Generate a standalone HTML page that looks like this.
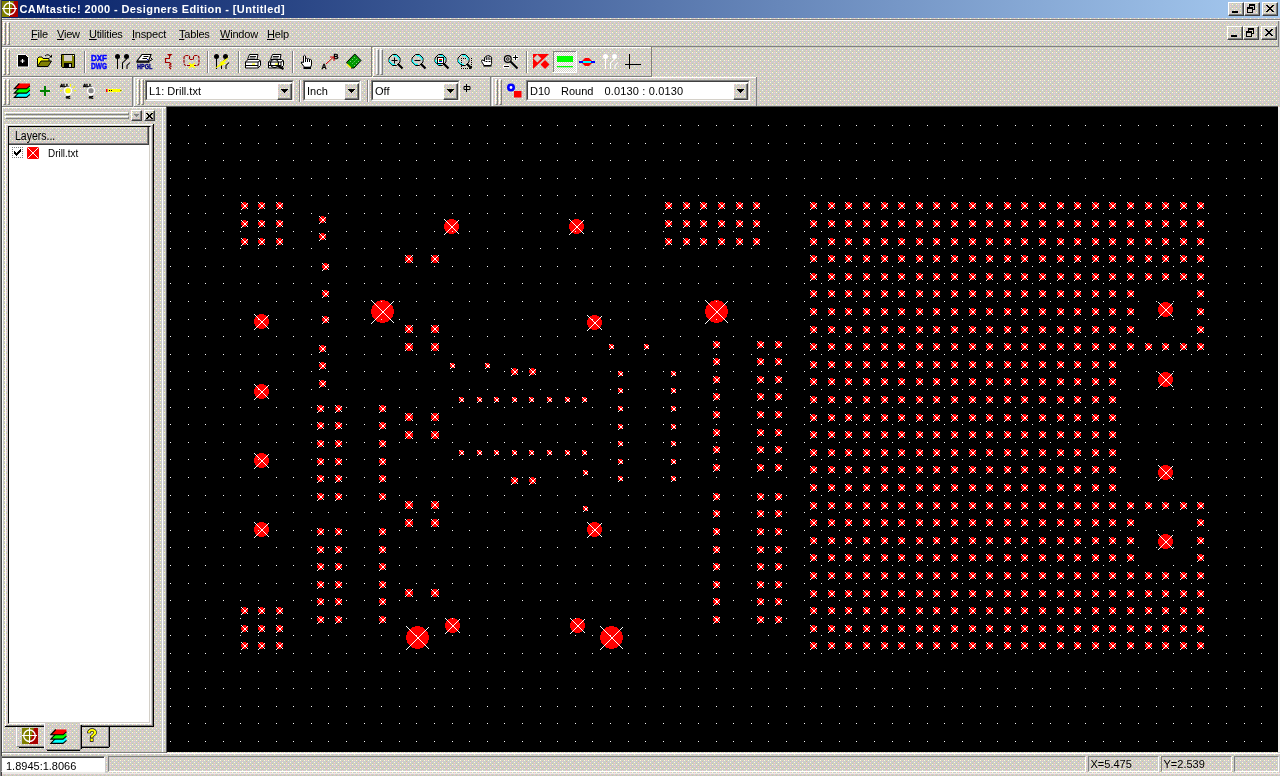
<!DOCTYPE html>
<html><head><meta charset="utf-8"><title>CAMtastic! 2000 - Designers Edition - [Untitled]</title>
<style>
*{box-sizing:border-box;margin:0;padding:0}
html,body{width:1280px;height:776px;overflow:hidden;background:#d4d0c8}
body{position:relative;font-family:"Liberation Sans",sans-serif;font-size:11px;color:#000}
.a{position:absolute}
.bg{position:absolute;left:0;top:0}
.title{position:absolute;left:2px;top:0;width:1278px;height:18px;background:linear-gradient(90deg,#0a246a 0%,#0a246a 3%,#a6caf0 100%)}
.title span{position:absolute;left:17.5px;top:2px;color:#fff;font-weight:bold;font-size:11px;line-height:14px;white-space:nowrap;letter-spacing:0.4px}
.hl{position:absolute;height:1px}
.vl{position:absolute;width:1px}
.w{background:#fff}.d{background:#808080}.k{background:#404040}.b{background:#000}
.btn{position:absolute;border:1px solid;border-color:#fff #404040 #404040 #fff;box-shadow:inset -1px -1px 0 #808080}
.menu span{position:absolute;top:27px;line-height:14px;font-size:11px;white-space:nowrap;letter-spacing:-0.2px}
.menu u{text-decoration:underline}
.sunk{position:absolute;border:1px solid;border-color:#808080 #fff #fff #808080}
.sunk>i{position:absolute;left:0;top:0;right:0;bottom:0;border:1px solid;border-color:#404040 #d4d0c8 #d4d0c8 #404040;background:#fff}
.txt{position:absolute;white-space:nowrap;line-height:14px;font-size:11px}
.grip{position:absolute;width:3px;border:1px solid;border-color:#fff #808080 #808080 #fff}
.sep{position:absolute;width:2px;border-left:1px solid #808080;border-right:1px solid #fff}
</style></head><body>
<div id="root" style="position:absolute;left:0;top:0;width:1280px;height:776px;will-change:transform">
<svg class="bg" width="1280" height="776"><defs><pattern id="dz" width="8" height="8" patternUnits="userSpaceOnUse" shape-rendering="crispEdges"><rect width="8" height="8" fill="#ccc"/><g fill="#ffc"><rect x="0" y="0" width="1" height="1"/><rect x="4" y="0" width="1" height="1"/><rect x="2" y="2" width="1" height="1"/><rect x="0" y="4" width="1" height="1"/><rect x="4" y="4" width="1" height="1"/></g><g fill="#fcc"><rect x="2" y="0" width="1" height="1"/><rect x="6" y="2" width="1" height="1"/><rect x="6" y="4" width="1" height="1"/><rect x="2" y="6" width="1" height="1"/><rect x="6" y="6" width="1" height="1"/></g><g fill="#cc9"><rect x="6" y="1" width="1" height="1"/><rect x="0" y="3" width="1" height="1"/><rect x="4" y="3" width="1" height="1"/><rect x="2" y="5" width="1" height="1"/><rect x="0" y="7" width="1" height="1"/><rect x="4" y="7" width="1" height="1"/></g></pattern></defs><rect width="1280" height="776" fill="url(#dz)"/></svg>
<div class="a" style="left:0;top:0;width:1px;height:776px;background:#808080"></div><div class="a" style="left:1px;top:0;width:1px;height:776px;background:#404040"></div>
<!-- TITLE -->
<div class="title"><span>CAMtastic! 2000 - Designers Edition - [Untitled]</span></div>
<svg class="a" style="left:2px;top:1px" width="16" height="16" viewBox="0 0 16 16"><rect width="16" height="16" fill="#808000"/><path d="M12 0H16V16H7L9.500 9.500L10.500 5Z" fill="#a80000"/><circle cx="7.500" cy="7.750" r="5.800" fill="none" stroke="#fff" stroke-width="1.400"/><path d="M7.500 0.200V15M0 7.500H15" stroke="#fff" stroke-width="1" shape-rendering="crispEdges"/></svg><svg class="a" style="left:1228px;top:2px" width="16" height="14" viewBox="1228 2 16 14"><rect x="1228" y="2" width="16" height="14" fill="url(#dz)"/></svg><svg class="a" style="left:1244px;top:2px" width="16" height="14" viewBox="1244 2 16 14"><rect x="1244" y="2" width="16" height="14" fill="url(#dz)"/></svg><svg class="a" style="left:1262px;top:2px" width="16" height="14" viewBox="1262 2 16 14"><rect x="1262" y="2" width="16" height="14" fill="url(#dz)"/></svg><div class="btn" style="left:1228px;top:2px;width:16px;height:14px;background:transparent"><div class="a" style="left:3px;top:8px;width:6px;height:2px;background:#000"></div></div><div class="btn" style="left:1244px;top:2px;width:16px;height:14px;background:transparent"><div class="a" style="left:4px;top:1px;width:6px;height:6px;border:1px solid #000;border-top-width:2px"></div><div class="a" style="left:2px;top:4px;width:6px;height:6px;border:1px solid #000;border-top-width:2px;background:#d4d0c8"></div></div><div class="btn" style="left:1262px;top:2px;width:16px;height:14px;background:transparent"><svg class="a" style="left:3px;top:2px" width="8" height="7" viewBox="0 0 8 7" shape-rendering="crispEdges"><path d="M0 0h2v1h1v1h2v-1h1v-1h2v1h-1v1h-1v1h-1v1h1v1h1v1h1v1h-2v-1h-1v-1h-2v1h-1v1h-2v-1h1v-1h1v-1h1v-1h-1v-1h-1v-1h-1z" fill="#000"/></svg></div>
<div class="a" style="left:2px;top:19px;width:1278px;height:1px;background:#808080"></div><div class="a" style="left:2px;top:20px;width:1278px;height:1px;background:#fff"></div><div class="a" style="left:2px;top:46px;width:1277px;height:1px;background:#808080"></div><div class="a" style="left:1278px;top:21px;width:1px;height:26px;background:#808080"></div><div class="grip" style="left:3px;top:22px;height:23px"></div><div class="grip" style="left:7px;top:22px;height:23px"></div><div class="menu"><span style="left:31px"><u>F</u>ile</span><span style="left:57px"><u>V</u>iew</span><span style="left:89px"><u>U</u>tilities</span><span style="left:132px"><u>I</u>nspect</span><span style="left:179px"><u>T</u>ables</span><span style="left:220px"><u>W</u>indow</span><span style="left:267px"><u>H</u>elp</span></div><div class="btn" style="left:1227px;top:26px;width:16px;height:14px;background:transparent"><div class="a" style="left:3px;top:8px;width:6px;height:2px;background:#000"></div></div><div class="btn" style="left:1243px;top:26px;width:16px;height:14px;background:transparent"><div class="a" style="left:4px;top:1px;width:6px;height:6px;border:1px solid #000;border-top-width:2px"></div><div class="a" style="left:2px;top:4px;width:6px;height:6px;border:1px solid #000;border-top-width:2px;background:#d4d0c8"></div></div><div class="btn" style="left:1261px;top:26px;width:16px;height:14px;background:transparent"><svg class="a" style="left:3px;top:2px" width="8" height="7" viewBox="0 0 8 7" shape-rendering="crispEdges"><path d="M0 0h2v1h1v1h2v-1h1v-1h2v1h-1v1h-1v1h-1v1h1v1h1v1h1v1h-2v-1h-1v-1h-2v1h-1v1h-2v-1h1v-1h1v-1h1v-1h-1v-1h-1v-1h-1z" fill="#000"/></svg></div>
<div class="a" style="left:2px;top:47px;width:370px;height:1px;background:#fff"></div><div class="a" style="left:2px;top:76px;width:370px;height:1px;background:#808080"></div><div class="a" style="left:371px;top:47px;width:1px;height:30px;background:#808080"></div><div class="a" style="left:2px;top:48px;width:1px;height:28px;background:#fff"></div><div class="grip" style="left:3px;top:49px;height:26px"></div><div class="grip" style="left:7px;top:49px;height:26px"></div><div class="sep" style="left:84px;top:51px;height:22px"></div><div class="sep" style="left:207px;top:51px;height:22px"></div><div class="sep" style="left:238px;top:51px;height:22px"></div><div class="sep" style="left:292px;top:51px;height:22px"></div><div class="a" style="left:373px;top:47px;width:279px;height:1px;background:#fff"></div><div class="a" style="left:373px;top:76px;width:279px;height:1px;background:#808080"></div><div class="a" style="left:651px;top:47px;width:1px;height:30px;background:#808080"></div><div class="a" style="left:373px;top:48px;width:1px;height:28px;background:#fff"></div><div class="grip" style="left:376px;top:49px;height:26px"></div><div class="grip" style="left:380px;top:49px;height:26px"></div><div class="sep" style="left:526px;top:51px;height:22px"></div><svg class="a" style="left:553px;top:51px" width="24" height="22" viewBox="0 0 24 22" shape-rendering="crispEdges"><defs><pattern id="chk" width="2" height="2" patternUnits="userSpaceOnUse"><rect width="2" height="2" fill="#fff"/><rect width="1" height="1" fill="#d4d0c8"/><rect x="1" y="1" width="1" height="1" fill="#d4d0c8"/></pattern></defs><rect width="24" height="22" fill="url(#chk)"/><path d="M0 0h24v1h-24zM0 0h1v22h-1z" fill="#808080"/><path d="M0 21h24v1h-24zM23 0h1v22h-1z" fill="#fff"/></svg><div class="a" style="left:2px;top:77px;width:131px;height:1px;background:#fff"></div><div class="a" style="left:2px;top:106px;width:131px;height:1px;background:#808080"></div><div class="a" style="left:132px;top:77px;width:1px;height:30px;background:#808080"></div><div class="a" style="left:2px;top:78px;width:1px;height:28px;background:#fff"></div><div class="grip" style="left:3px;top:79px;height:26px"></div><div class="grip" style="left:7px;top:79px;height:26px"></div><div class="a" style="left:134px;top:77px;width:357px;height:1px;background:#fff"></div><div class="a" style="left:134px;top:106px;width:357px;height:1px;background:#808080"></div><div class="a" style="left:490px;top:77px;width:1px;height:30px;background:#808080"></div><div class="a" style="left:134px;top:78px;width:1px;height:28px;background:#fff"></div><div class="grip" style="left:137px;top:79px;height:26px"></div><div class="grip" style="left:141px;top:79px;height:26px"></div><div class="sunk" style="left:145px;top:80px;width:149px;height:21px"><i></i><span class="txt" style="left:3px;top:3px">L1: Drill.txt</span></div><svg class="a" style="left:277px;top:83px" width="15" height="17" viewBox="277 83 15 17"><rect x="277" y="83" width="15" height="17" fill="url(#dz)"/></svg><div class="btn" style="left:277px;top:83px;width:15px;height:17px"><svg class="a" style="left:3px;top:5px" width="7" height="4" viewBox="0 0 7 4" shape-rendering="crispEdges"><path d="M0 0h7v1h-1v1h-1v1h-1v1h-1v-1h-1v-1h-1v-1h-1z" fill="#000"/></svg></div><div class="sep" style="left:299px;top:80px;height:22px"></div><div class="sunk" style="left:303px;top:80px;width:58px;height:21px"><i></i><span class="txt" style="left:3px;top:3px">Inch</span></div><svg class="a" style="left:344px;top:83px" width="15" height="17" viewBox="344 83 15 17"><rect x="344" y="83" width="15" height="17" fill="url(#dz)"/></svg><div class="btn" style="left:344px;top:83px;width:15px;height:17px"><svg class="a" style="left:3px;top:5px" width="7" height="4" viewBox="0 0 7 4" shape-rendering="crispEdges"><path d="M0 0h7v1h-1v1h-1v1h-1v1h-1v-1h-1v-1h-1v-1h-1z" fill="#000"/></svg></div><div class="sep" style="left:367px;top:80px;height:22px"></div><div class="sunk" style="left:371px;top:80px;width:89px;height:21px"><i></i><span class="txt" style="left:3px;top:3px">Off</span></div><svg class="a" style="left:443px;top:83px" width="15" height="17" viewBox="443 83 15 17"><rect x="443" y="83" width="15" height="17" fill="url(#dz)"/></svg><div class="btn" style="left:443px;top:83px;width:15px;height:17px"><svg class="a" style="left:3px;top:5px" width="7" height="4" viewBox="0 0 7 4" shape-rendering="crispEdges"><path d="M0 0h7v1h-1v1h-1v1h-1v1h-1v-1h-1v-1h-1v-1h-1z" fill="#000"/></svg></div><div class="a" style="left:492px;top:77px;width:265px;height:1px;background:#fff"></div><div class="a" style="left:492px;top:106px;width:265px;height:1px;background:#808080"></div><div class="a" style="left:756px;top:77px;width:1px;height:30px;background:#808080"></div><div class="a" style="left:492px;top:78px;width:1px;height:28px;background:#fff"></div><div class="grip" style="left:495px;top:79px;height:26px"></div><div class="grip" style="left:499px;top:79px;height:26px"></div><div class="sunk" style="left:526px;top:80px;width:224px;height:21px"><i></i><span class="txt" style="left:3px;top:3px">D10<span class="txt" style="left:31px;top:0">Round</span><span class="txt" style="left:74.5px;top:0;letter-spacing:0.15px">0.0130 : 0.0130</span></span></div><svg class="a" style="left:733px;top:83px" width="15" height="17" viewBox="733 83 15 17"><rect x="733" y="83" width="15" height="17" fill="url(#dz)"/></svg><div class="btn" style="left:733px;top:83px;width:15px;height:17px"><svg class="a" style="left:3px;top:5px" width="7" height="4" viewBox="0 0 7 4" shape-rendering="crispEdges"><path d="M0 0h7v1h-1v1h-1v1h-1v1h-1v-1h-1v-1h-1v-1h-1z" fill="#000"/></svg></div><svg class="a" style="left:0;top:47px" width="760" height="59" viewBox="0 47 760 59"><path d="M17.5 54.5h8l3 3v9.5h-11z" fill="#000" stroke="#fff" stroke-width="1"/><path d="M22.5 59v4M20.5 61h4" stroke="#fff" stroke-width="1.2"/><rect x="26" y="55" width="1" height="1" fill="#fff"/><path d="M37.5 66.5v-8l1.5-1.5h3l1 1.5h6v2.5" fill="#ff0" stroke="#000" stroke-width="1"/><path d="M37.5 66.5l3.5-5.5h10.5l-3.5 5.5z" fill="#808000" stroke="#000" stroke-width="1"/><path d="M45 56q3-3 6 1" fill="none" stroke="#000" stroke-width="1"/><path d="M49 57.5h3v-3z" fill="#000"/><path d="M61.5 54.5h13v13h-12l-1-1z" fill="#808000" stroke="#000" stroke-width="1"/><rect x="64" y="55" width="8" height="6" fill="#d4d0c8"/><rect x="64" y="63" width="8" height="4.5" fill="#000"/><rect x="69" y="64" width="2" height="3" fill="#d4d0c8"/><rect x="73" y="55" width="1" height="1" fill="#fff"/><g font-family="Liberation Sans,sans-serif" font-weight="bold" font-size="9" fill="#00f" stroke="#00f" stroke-width="0.5"><text x="91" y="60.6" textLength="16" lengthAdjust="spacingAndGlyphs">DXF</text><text x="91" y="68.6" textLength="16" lengthAdjust="spacingAndGlyphs">DWG</text></g><g transform="translate(115 54)"><circle cx="2.500" cy="2.500" r="2.500" fill="#000"/><circle cx="11.500" cy="2.500" r="2.500" fill="#000"/><path d="M2.500 3v12M11.500 3v2l-4 4v6M15 8.500l-3 3v3.500" fill="none" stroke="#000" stroke-width="1.050"/></g><path d="M142 54.500H151L148.500 61H137Z" fill="#fff" stroke="#000" stroke-width="1.100"/><path d="M143.500 56.500H148.500M142.500 58.500H147" stroke="#000" stroke-width="1"/><path d="M136.500 62H149.500" stroke="#000" stroke-width="1.600"/><path d="M148.500 61.500L152.500 59.500L150.500 57.500" fill="none" stroke="#000" stroke-width="1"/><rect x="147" y="59" width="1" height="1" fill="#00f"/><text x="137" y="69" font-family="Liberation Sans,sans-serif" font-weight="bold" font-size="7" fill="#000080" stroke="#000080" stroke-width="0.400" textLength="15.500" lengthAdjust="spacingAndGlyphs">HPGL</text><path d="M167 54h5.500l-2.750 2.800z" fill="#a00000"/><path d="M169.500 56v2.500h-4v4h4l1.500 1.500l-1.500 1l1.500 1.300l-1.500 1.200l1.500 1.500" fill="none" stroke="#a00000" stroke-width="1.200"/><path d="M190 65.500h-3.500q-2.500 0-2.500-2.500v-5q0-2.500 2.500-2.500h1.500q1.500 0 1.500 1.500v2.500h4v-2.500q0-1.500 1.500-1.500h1.500q2.500 0 2.500 2.500v5q0 2.500-2.500 2.500h-3" fill="none" stroke="#900" stroke-width="1.2" stroke-dasharray="3 0.8"/><path d="M189 63l6 5M195 63l-6 5" stroke="#ff0" stroke-width="1.2"/><rect x="190" y="64" width="4" height="3" fill="#ff0"/><g transform="translate(214 54)"><circle cx="2.500" cy="2.500" r="2.500" fill="#000"/><circle cx="11.500" cy="2.500" r="2.500" fill="#000"/><path d="M2.500 3v12M11.500 3v2l-4 4v6M15 8.500l-3 3v3.500" fill="none" stroke="#000" stroke-width="1.050"/></g><path d="M214 69l7-6h-2l10-6l-5 6h3z" fill="#ff0"/><g transform="translate(245 54)"><path d="M4.500 0.500h8.500l-1 5h-9.500z" fill="#fff" stroke="#000" stroke-width="1"/><path d="M5 2.500h6M4.500 4h6" stroke="#000" stroke-width="0.900"/><path d="M0.500 8l2.500-2.500h10.500l2 1.500v4.500l-2.500 2.500h-12.500z" fill="#fff" stroke="#000" stroke-width="1"/><path d="M0.500 8h12.500l2.500-1.500M13 8v5.500M1 11.500h12" fill="none" stroke="#000" stroke-width="1"/><rect x="7" y="9.500" width="3" height="1.200" fill="#ff0"/></g><g transform="translate(268 54)"><path d="M4.500 0.500h8.500l-1 5h-9.500z" fill="#fff" stroke="#000" stroke-width="1"/><path d="M5 2.500h6M4.500 4h6" stroke="#000" stroke-width="0.900"/><path d="M0.500 8l2.500-2.500h10.500l2 1.500v4.500l-2.500 2.500h-12.500z" fill="#fff" stroke="#000" stroke-width="1"/><path d="M0.500 8h12.500l2.500-1.500M13 8v5.500M1 11.500h12" fill="none" stroke="#000" stroke-width="1"/><rect x="7" y="9.500" width="3" height="1.200" fill="#ff0"/></g><circle cx="274.500" cy="63.500" r="4" fill="none" stroke="#000" stroke-width="1.2"/><path d="M278 66l5.500 3" stroke="#000" stroke-width="2"/><path d="M303.500 62.500V56q1-1.500 2 0V59.500V58.800q1-1 2 0V60V59.200q1-1 2 0V60.500V59.800q1.200-1 2 0.200V65l-1 2.200H304.500L301.300 63q-0.300-1.800 2.200-0.500z" fill="#fff" stroke="#000" stroke-width="1"/><path d="M305.500 58.500v3.500M307.500 59v3M309.500 59.500v2.500" stroke="#000" stroke-width="1"/><rect x="303.500" y="67" width="7.500" height="2" fill="#000"/><g font-family="Liberation Sans,sans-serif" font-weight="bold" font-size="7" fill="#000" stroke="#000" stroke-width="0.3"><text x="321.500" y="69">A</text><text x="333.500" y="59">B</text></g><path d="M326 64l7.500-7" stroke="#c00" stroke-width="1"/><path d="M330 57h4v4" fill="none" stroke="#c00" stroke-width="1"/><path d="M354.800 54L361 60.500L354 68H351L346.500 62.500Z" fill="#009900" stroke="#000" stroke-width="1"/><path d="M347 64L351 68" stroke="#ff0" stroke-width="1.300"/><path d="M350 62l5.500-5.500M352.500 63.500l5.500-5.500M354 66l5-5" stroke="#bfe8bf" stroke-width="1" stroke-dasharray="1 1.800"/><g transform="translate(388 54)"><path d="M4.500 0.500h4l3.500 3.500v4l-3.500 3.500h-4l-3.500-3.500v-4z" fill="none" stroke="#000" stroke-width="1"/><path d="M5.500 1.600h2.700l2.800 2.800v1.800M1.600 5.500v2.100l2.800 2.800h2.400" fill="none" stroke="#0ff" stroke-width="1.100"/><path d="M9.800 9.800l4.700 4.700" stroke="#000" stroke-width="2.200"/></g><path d="M394.500 57.500v6M391.500 60.500h6" stroke="#000" stroke-width="1"/><g transform="translate(411 54)"><path d="M4.500 0.500h4l3.500 3.500v4l-3.500 3.500h-4l-3.500-3.500v-4z" fill="none" stroke="#000" stroke-width="1"/><path d="M5.500 1.600h2.700l2.800 2.800v1.800M1.600 5.500v2.100l2.800 2.800h2.400" fill="none" stroke="#0ff" stroke-width="1.100"/><path d="M9.800 9.800l4.700 4.700" stroke="#000" stroke-width="2.200"/></g><path d="M414.500 60.500h6" stroke="#000" stroke-width="1"/><g transform="translate(434 54)"><path d="M4.500 0.500h4l3.500 3.500v4l-3.500 3.500h-4l-3.500-3.500v-4z" fill="none" stroke="#000" stroke-width="1"/><path d="M5.500 1.600h2.700l2.800 2.800v1.800M1.600 5.500v2.100l2.800 2.800h2.400" fill="none" stroke="#0ff" stroke-width="1.100"/><path d="M9.800 9.800l4.700 4.700" stroke="#000" stroke-width="2.200"/></g><rect x="437.500" y="57.500" width="6" height="6" fill="#fff" stroke="#000" stroke-width="1"/><rect x="439" y="59" width="3" height="1" fill="#f00"/><rect x="439" y="60" width="3" height="1" fill="#0c0"/><rect x="439" y="61" width="3" height="1" fill="#00f"/><g transform="translate(457 54)"><path d="M4.500 0.500h4l3.500 3.500v4l-3.500 3.500h-4l-3.500-3.500v-4z" fill="none" stroke="#000" stroke-width="1"/><path d="M5.500 1.600h2.700l2.800 2.800v1.800M1.600 5.500v2.100l2.800 2.800h2.400" fill="none" stroke="#0ff" stroke-width="1.100"/><path d="M9.800 9.800l4.700 4.700" stroke="#000" stroke-width="2.200"/></g><path d="M461.500 58v10M461 68.500h10M471.500 58v10M461 58.500h6" fill="none" stroke="#000" stroke-width="1" stroke-dasharray="1 1" shape-rendering="crispEdges"/><path d="M484 65.500L481.600 61.500q-0.300-2 1.400-1.500l1.500 1.200V57.500q0.800-1.300 1.700 0V56.200q0.900-1.300 1.800 0V56q0.900-1.300 1.800 0V57q0.900-1.200 1.800 0.200V63.500L490.800 65.500Z" fill="#fff" stroke="#000" stroke-width="1"/><path d="M485.500 61.500h2M488.500 61.500h2M486.300 57.500v2.500M488.100 57v3M489.900 57.500v2.500" stroke="#000" stroke-width="1"/><rect x="483.500" y="65.200" width="8" height="1.400" fill="#000"/><circle cx="507.800" cy="59" r="3.400" fill="none" stroke="#000" stroke-width="1.200"/><circle cx="507.800" cy="59" r="1.300" fill="none" stroke="#000" stroke-width="0.900"/><path d="M510.500 61.500l7 7" stroke="#000" stroke-width="2"/><path d="M512.500 57.500h6M515.500 54.500v6" stroke="#fff" stroke-width="2.800"/><path d="M513 57.500h5M515.500 55v5" stroke="#000" stroke-width="1.300" shape-rendering="crispEdges"/><path d="M503 66.500h6.500" stroke="#fff" stroke-width="3"/><path d="M504 66.500h5" stroke="#000" stroke-width="1.300" shape-rendering="crispEdges"/><path d="M533 54h16l-16 15z" fill="#f00"/><path d="M537.300 54.500l4 4l-4 4l-4-4z" fill="#d4d0c8"/><path d="M545 60l4.500 4.500l-4.500 4.500l-4.500-4.500z" fill="#f00"/><rect x="557" y="56" width="16" height="6" fill="#0f0"/><rect x="557" y="66" width="16" height="1.300" fill="#0f0"/><path d="M585 58h4l2.500 2.500v3l-2.500 2.500h-4l-2.500-2.500v-3z" fill="#f00"/><rect x="579" y="61" width="16" height="2" fill="#00f"/><rect x="583" y="61" width="8" height="2" fill="#0ff"/><g transform="translate(603 54)"><circle cx="2.500" cy="2.500" r="2.500" fill="#fff"/><circle cx="11.500" cy="2.500" r="2.500" fill="#fff"/><path d="M2.500 3v12M11.500 3v2l-4 4v6M15 8.500l-3 3v3.500" fill="none" stroke="#fff" stroke-width="1.050"/></g><path d="M629.500 54v15M625 64.500h16" stroke="#000" stroke-width="1"/><g transform="translate(13.500 83)"><g transform="translate(0 8.6)"><path d="M5.500 0.500H16.500V2.800L13 5.800H0.500Z" fill="#0ff"/><path d="M5.800 0.500L0.800 5.800H13L16.500 2.800" fill="none" stroke="#000" stroke-width="1.100"/></g><g transform="translate(0 4.3)"><path d="M5.500 0.500H16.500V2.800L13 5.800H0.500Z" fill="#0f0"/><path d="M5.800 0.500L0.800 5.800H13L16.500 2.800" fill="none" stroke="#000" stroke-width="1.100"/></g><g transform="translate(0 0.0)"><path d="M5.500 0.500H16.500V2.800L13 5.800H0.500Z" fill="#f00"/><path d="M5.800 0.500L0.800 5.800H13L16.500 2.800" fill="none" stroke="#000" stroke-width="1.100"/></g></g><path d="M45 86v10M40 91h10" stroke="#008000" stroke-width="2"/><g transform="translate(60 84)"><text x="0" y="3" font-family="Liberation Sans,sans-serif" font-weight="bold" font-size="4.300" fill="#000" stroke="#000" stroke-width="0.450" textLength="9" lengthAdjust="spacingAndGlyphs">ALL</text><circle cx="8" cy="6.700" r="3.500" fill="none" stroke="#fff" stroke-width="1.300"/><path d="M6 9.500h4v2h-4z" fill="#fff"/><circle cx="8" cy="6.700" r="2.500" fill="#ff0"/><path d="M10.500 0v2.500M13.200 4.200l1.800-1.800M14 6.700h2.200M0 6.700h2.200" stroke="#ff0" stroke-width="1.100"/><path d="M6 13.500q1-1.600 2 0q1 1.600 2.200 0.300M10.200 12.400q-1.200-0.300-2.200 1.100q-1 1.400-2 0" fill="none" stroke="#000" stroke-width="1.250"/></g><g transform="translate(83 84)"><text x="0" y="3" font-family="Liberation Sans,sans-serif" font-weight="bold" font-size="4.300" fill="#000" stroke="#000" stroke-width="0.450" textLength="9" lengthAdjust="spacingAndGlyphs">ALL</text><circle cx="8" cy="6.700" r="3.500" fill="none" stroke="#fff" stroke-width="1.300"/><path d="M6 9.500h4v2h-4z" fill="#fff"/><circle cx="8" cy="6.700" r="2.500" fill="#8a8a8a"/><path d="M6 13.500q1-1.600 2 0q1 1.600 2.200 0.300M10.200 12.400q-1.200-0.300-2.200 1.100q-1 1.400-2 0" fill="none" stroke="#000" stroke-width="1.250"/></g><rect x="106" y="89" width="1.500" height="3" fill="#f00"/><path d="M108 89h12l2 1.500l-2 1.500h-12z" fill="#ff0"/><rect x="109" y="90" width="1" height="1" fill="#000"/><rect x="111" y="90" width="1" height="1" fill="#000"/><rect x="120" y="90" width="1.500" height="1" fill="#880"/><path d="M466.500 84v8M464 86.500h6v3h-6z" fill="none" stroke="#000" stroke-width="1"/><circle cx="511" cy="87.500" r="2.700" fill="#fff" stroke="#00f" stroke-width="2.600"/><rect x="514" y="91" width="7.500" height="6.500" fill="#f00"/></svg>
<div class="a" style="left:2px;top:107px;width:164px;height:1px;background:#fff"></div><div class="a" style="left:2px;top:107px;width:1px;height:646px;background:#fff"></div><div class="a" style="left:162px;top:108px;width:1px;height:645px;background:#fff"></div><div class="a" style="left:2px;top:752px;width:165px;height:1px;background:#808080"></div><div class="a" style="left:1278px;top:107px;width:2px;height:645px;background:#f4f2f0"></div><div class="a" style="left:166px;top:106px;width:1112px;height:1px;background:#555"></div><div class="a" style="left:166px;top:106px;width:1px;height:647px;background:#555"></div><div class="a" style="left:5px;top:112px;width:124px;height:3px;border:1px solid;border-color:#fff #808080 #808080 #fff"></div><div class="a" style="left:5px;top:116px;width:124px;height:3px;border:1px solid;border-color:#fff #808080 #808080 #fff"></div><div class="btn" style="left:131px;top:110px;width:11px;height:11px"><svg class="a" style="left:2px;top:3px" width="5" height="3" viewBox="0 0 5 3" shape-rendering="crispEdges"><path d="M0 0h5v1h-1v1h-1v1h-1v-1h-1v-1h-1z" fill="#808080"/><path d="M1 1h1v1h1v1h1v-1h1v-1" fill="none"/></svg></div><div class="btn" style="left:144px;top:110px;width:11px;height:11px"><svg class="a" style="left:1px;top:2px" width="7" height="6" viewBox="0 0 7 6" shape-rendering="crispEdges"><path d="M0 0h2v1h1v1h1v-1h1v-1h2v1h-1v1h-1v2h1v1h1v1h-2v-1h-1v-1h-1v1h-1v1h-2v-1h1v-1h1v-2h-1v-1h-1z" fill="#000"/></svg></div><div class="a" style="left:5px;top:124px;width:1px;height:602px;background:#fff"></div><div class="a" style="left:5px;top:124px;width:148px;height:1px;background:#fff"></div><div class="a" style="left:153px;top:124px;width:1px;height:603px;background:#000"></div><div class="a" style="left:152px;top:125px;width:1px;height:601px;background:#808080"></div><div class="a" style="left:6px;top:725px;width:147px;height:1px;background:#808080"></div><div class="a" style="left:5px;top:726px;width:149px;height:1px;background:#000"></div><div class="a" style="left:8px;top:126px;width:143px;height:598px;background:#fff;border:1px solid;border-color:#000 #fff #fff #000"></div><div class="a" style="left:149px;top:127px;width:1px;height:596px;background:#d4d0c8"></div><div class="a" style="left:9px;top:722px;width:141px;height:1px;background:#d4d0c8"></div><svg class="a" style="left:9px;top:127px" width="140" height="18" viewBox="9 127 140 18"><rect x="9" y="127" width="140" height="18" fill="url(#dz)"/></svg><div class="a" style="left:9px;top:127px;width:140px;height:18px;border-bottom:1px solid #404040;border-right:1px solid #404040;box-shadow:inset -1px -1px 0 #808080"></div><span class="txt" style="left:14.5px;top:129px;font-size:12.5px;transform:scaleX(0.84);transform-origin:0 0">Layers...</span><div class="a" style="left:12px;top:147px;width:11px;height:11px;border:1px dotted #808080;background:#fff"></div><svg class="a" style="left:14px;top:149px" width="7" height="7" viewBox="0 0 7 7" shape-rendering="crispEdges"><path d="M0 2h1v1h1v1h1v-1h1v-1h1v-1h1v-1h1v3h-1v1h-1v1h-1v1h-1v1h-1v-1h-1v-1h-1z" fill="#000"/></svg><svg class="a" style="left:27px;top:147px" width="12" height="12" viewBox="0 0 12 12"><rect width="12" height="12" rx="1.5" fill="#f00"/><path d="M1 1L11 11M11 1L1 11" stroke="#fff" stroke-width="1"/></svg><span class="txt" style="left:47.5px;top:145.5px;font-size:11.5px;transform:scaleX(0.86);transform-origin:0 0">Drill.txt</span><div class="a" style="left:16px;top:727px;width:1px;height:19px;background:#fff"></div><div class="a" style="left:17px;top:746px;width:27px;height:1px;background:#808080"></div><div class="a" style="left:19px;top:747px;width:25px;height:1px;background:#000"></div><svg class="a" style="left:22px;top:728px" width="16" height="16" viewBox="0 0 16 16"><rect width="16" height="16" fill="#808000"/><path d="M12 0H16V16H7L9.500 9.500L10.500 5Z" fill="#a80000"/><circle cx="7.500" cy="7.750" r="5.800" fill="none" stroke="#fff" stroke-width="1.400"/><path d="M7.500 0.200V15M0 7.500H15" stroke="#fff" stroke-width="1" shape-rendering="crispEdges"/></svg><svg class="a" style="left:45px;top:723px" width="35" height="27" viewBox="45 723 35 27"><rect x="45" y="723" width="35" height="27" fill="url(#dz)"/></svg><div class="a" style="left:44px;top:724px;width:1px;height:25px;background:#fff"></div><div class="a" style="left:46px;top:749px;width:34px;height:1px;background:#808080"></div><div class="a" style="left:47px;top:750px;width:33px;height:1px;background:#000"></div><div class="a" style="left:80px;top:725px;width:1px;height:25px;background:#808080"></div><div class="a" style="left:81px;top:725px;width:1px;height:24px;background:#000"></div><svg class="a" style="left:50px;top:728.5px" width="18" height="16" viewBox="0 0 18 16"><g transform="translate(0 8.6)"><path d="M5.500 0.500H16.500V2.800L13 5.800H0.500Z" fill="#0ff"/><path d="M5.800 0.500L0.800 5.800H13L16.500 2.800" fill="none" stroke="#000" stroke-width="1.100"/></g><g transform="translate(0 4.3)"><path d="M5.500 0.500H16.500V2.800L13 5.800H0.500Z" fill="#0f0"/><path d="M5.800 0.500L0.800 5.800H13L16.500 2.800" fill="none" stroke="#000" stroke-width="1.100"/></g><g transform="translate(0 0.0)"><path d="M5.500 0.500H16.500V2.800L13 5.800H0.500Z" fill="#f00"/><path d="M5.800 0.500L0.800 5.800H13L16.500 2.800" fill="none" stroke="#000" stroke-width="1.100"/></g></svg><div class="a" style="left:82px;top:746px;width:27px;height:1px;background:#808080"></div><div class="a" style="left:82px;top:747px;width:27px;height:1px;background:#000"></div><div class="a" style="left:108px;top:727px;width:1px;height:20px;background:#808080"></div><div class="a" style="left:109px;top:727px;width:1px;height:20px;background:#000"></div><svg class="a" style="left:85px;top:726px" width="14" height="18" viewBox="0 0 14 18"><text x="7" y="15" text-anchor="middle" font-family="Liberation Sans,sans-serif" font-weight="bold" font-size="16.500" fill="#ff0" stroke="#000" stroke-width="1.300" paint-order="stroke">?</text></svg>
<svg class="a" style="left:167px;top:107px" width="1111" height="645" viewBox="167 107 1111 645" shape-rendering="crispEdges">
<defs>
<pattern id="grid" x="167" y="107" width="88" height="88" patternUnits="userSpaceOnUse"><g fill="#f2f2f2"><rect x="3" y="18" width="1" height="1"/><rect x="3" y="36" width="1" height="1"/><rect x="3" y="53" width="1" height="1"/><rect x="3" y="71" width="1" height="1"/><rect x="3" y="0" width="1" height="1"/><rect x="21" y="18" width="1" height="1"/><rect x="21" y="36" width="1" height="1"/><rect x="21" y="53" width="1" height="1"/><rect x="21" y="71" width="1" height="1"/><rect x="21" y="0" width="1" height="1"/><rect x="38" y="18" width="1" height="1"/><rect x="38" y="36" width="1" height="1"/><rect x="38" y="53" width="1" height="1"/><rect x="38" y="71" width="1" height="1"/><rect x="38" y="0" width="1" height="1"/><rect x="56" y="18" width="1" height="1"/><rect x="56" y="36" width="1" height="1"/><rect x="56" y="53" width="1" height="1"/><rect x="56" y="71" width="1" height="1"/><rect x="56" y="0" width="1" height="1"/><rect x="73" y="18" width="1" height="1"/><rect x="73" y="36" width="1" height="1"/><rect x="73" y="53" width="1" height="1"/><rect x="73" y="71" width="1" height="1"/><rect x="73" y="0" width="1" height="1"/></g></pattern>
<g id="t"><path d="M-1 -2h3v1h-3zM-2 -1h5v1h-5zM-2 0h5v1h-5zM-2 1h5v1h-5zM-1 2h3v1h-3z" fill="#f00"/><path d="M-2 -2h1v1h-1zM-2 3h1v1h-1zM-1 -1h1v1h-1zM-1 2h1v1h-1zM0 0h1v1h-1zM0 1h1v1h-1zM1 1h1v1h-1zM1 0h1v1h-1zM2 2h1v1h-1zM2 -1h1v1h-1z" fill="#fff"/></g>
<g id="s"><path d="M-1 -3h3v1h-3zM-2 -2h5v1h-5zM-3 -1h7v1h-7zM-3 0h7v1h-7zM-3 1h7v1h-7zM-2 2h5v1h-5zM-1 3h3v1h-3z" fill="#f00"/><path d="M-3 -3h1v1h-1zM-3 4h1v1h-1zM-2 -2h1v1h-1zM-2 3h1v1h-1zM-1 -1h1v1h-1zM-1 2h1v1h-1zM0 0h1v1h-1zM0 1h1v1h-1zM1 1h1v1h-1zM1 0h1v1h-1zM2 2h1v1h-1zM2 -1h1v1h-1zM3 3h1v1h-1zM3 -2h1v1h-1z" fill="#fff"/></g>
<g id="p"><path d="M-1 -3h4v1h-4zM-2 -2h6v1h-6zM-3 -1h8v1h-8zM-3 0h8v1h-8zM-3 1h8v1h-8zM-3 2h8v1h-8zM-2 3h6v1h-6zM-1 4h4v1h-4z" fill="#f00"/><path d="M-3 -3h1v1h-1zM-3 4h1v1h-1zM-2 -2h1v1h-1zM-2 3h1v1h-1zM-1 -1h1v1h-1zM-1 2h1v1h-1zM0 0h1v1h-1zM0 1h1v1h-1zM1 1h1v1h-1zM1 0h1v1h-1zM2 2h1v1h-1zM2 -1h1v1h-1zM3 3h1v1h-1zM3 -2h1v1h-1zM4 4h1v1h-1zM4 -3h1v1h-1z" fill="#fff"/></g>
<g id="m"><path d="M-2 -7h5v1h-5zM-4 -6h9v1h-9zM-5 -5h11v1h-11zM-6 -4h13v1h-13zM-6 -3h13v1h-13zM-7 -2h15v1h-15zM-7 -1h15v1h-15zM-7 0h15v1h-15zM-7 1h15v1h-15zM-7 2h15v1h-15zM-6 3h13v1h-13zM-6 4h13v1h-13zM-5 5h11v1h-11zM-4 6h9v1h-9zM-2 7h5v1h-5z" fill="#f00"/><path d="M-7 -7h1v1h-1zM-7 8h1v1h-1zM-6 -6h1v1h-1zM-6 7h1v1h-1zM-5 -5h1v1h-1zM-5 6h1v1h-1zM-4 -4h1v1h-1zM-4 5h1v1h-1zM-3 -3h1v1h-1zM-3 4h1v1h-1zM-2 -2h1v1h-1zM-2 3h1v1h-1zM-1 -1h1v1h-1zM-1 2h1v1h-1zM0 0h1v1h-1zM0 1h1v1h-1zM1 1h1v1h-1zM1 0h1v1h-1zM2 2h1v1h-1zM2 -1h1v1h-1zM3 3h1v1h-1zM3 -2h1v1h-1zM4 4h1v1h-1zM4 -3h1v1h-1zM5 5h1v1h-1zM5 -4h1v1h-1zM6 6h1v1h-1zM6 -5h1v1h-1zM7 7h1v1h-1zM7 -6h1v1h-1z" fill="#fff"/></g>
<g id="l"><path d="M-2 -11h5v1h-5zM-5 -10h11v1h-11zM-6 -9h13v1h-13zM-7 -8h15v1h-15zM-8 -7h17v1h-17zM-9 -6h19v1h-19zM-10 -5h21v1h-21zM-10 -4h21v1h-21zM-10 -3h21v1h-21zM-11 -2h23v1h-23zM-11 -1h23v1h-23zM-11 0h23v1h-23zM-11 1h23v1h-23zM-11 2h23v1h-23zM-10 3h21v1h-21zM-10 4h21v1h-21zM-10 5h21v1h-21zM-9 6h19v1h-19zM-8 7h17v1h-17zM-7 8h15v1h-15zM-6 9h13v1h-13zM-5 10h11v1h-11zM-2 11h5v1h-5z" fill="#f00"/><path d="M-11 -11h1v1h-1zM-11 12h1v1h-1zM-10 -10h1v1h-1zM-10 11h1v1h-1zM-9 -9h1v1h-1zM-9 10h1v1h-1zM-8 -8h1v1h-1zM-8 9h1v1h-1zM-7 -7h1v1h-1zM-7 8h1v1h-1zM-6 -6h1v1h-1zM-6 7h1v1h-1zM-5 -5h1v1h-1zM-5 6h1v1h-1zM-4 -4h1v1h-1zM-4 5h1v1h-1zM-3 -3h1v1h-1zM-3 4h1v1h-1zM-2 -2h1v1h-1zM-2 3h1v1h-1zM-1 -1h1v1h-1zM-1 2h1v1h-1zM0 0h1v1h-1zM0 1h1v1h-1zM1 1h1v1h-1zM1 0h1v1h-1zM2 2h1v1h-1zM2 -1h1v1h-1zM3 3h1v1h-1zM3 -2h1v1h-1zM4 4h1v1h-1zM4 -3h1v1h-1zM5 5h1v1h-1zM5 -4h1v1h-1zM6 6h1v1h-1zM6 -5h1v1h-1zM7 7h1v1h-1zM7 -6h1v1h-1zM8 8h1v1h-1zM8 -7h1v1h-1zM9 9h1v1h-1zM9 -8h1v1h-1zM10 10h1v1h-1zM10 -9h1v1h-1zM11 11h1v1h-1zM11 -10h1v1h-1z" fill="#fff"/></g>
</defs>
<rect x="167" y="107" width="1111" height="645" fill="#000"/>
<use href="#s" x="244" y="205"/>
<use href="#s" x="244" y="223"/>
<use href="#s" x="244" y="241"/>
<use href="#s" x="261" y="205"/>
<use href="#s" x="261" y="223"/>
<use href="#s" x="261" y="241"/>
<use href="#s" x="279" y="205"/>
<use href="#s" x="279" y="223"/>
<use href="#s" x="279" y="241"/>
<use href="#s" x="244" y="610"/>
<use href="#s" x="244" y="628"/>
<use href="#s" x="244" y="645"/>
<use href="#s" x="261" y="610"/>
<use href="#s" x="261" y="628"/>
<use href="#s" x="261" y="645"/>
<use href="#s" x="279" y="610"/>
<use href="#s" x="279" y="628"/>
<use href="#s" x="279" y="645"/>
<use href="#s" x="322" y="219"/>
<use href="#s" x="322" y="236"/>
<use href="#s" x="325" y="266"/>
<use href="#s" x="325" y="293"/>
<use href="#s" x="325" y="319"/>
<use href="#s" x="322" y="348"/>
<use href="#s" x="322" y="365"/>
<use href="#s" x="322" y="383"/>
<use href="#p" x="408" y="258"/>
<use href="#p" x="434" y="258"/>
<use href="#p" x="408" y="328"/>
<use href="#p" x="434" y="328"/>
<use href="#p" x="408" y="346"/>
<use href="#p" x="434" y="346"/>
<use href="#p" x="408" y="416"/>
<use href="#p" x="434" y="416"/>
<use href="#p" x="408" y="434"/>
<use href="#p" x="434" y="434"/>
<use href="#p" x="408" y="504"/>
<use href="#p" x="434" y="504"/>
<use href="#p" x="408" y="522"/>
<use href="#p" x="434" y="522"/>
<use href="#p" x="408" y="592"/>
<use href="#p" x="434" y="592"/>
<use href="#m" x="261" y="321"/>
<use href="#m" x="261" y="391"/>
<use href="#m" x="261" y="460"/>
<use href="#m" x="261" y="529"/>
<use href="#m" x="451" y="226"/>
<use href="#m" x="576" y="226"/>
<use href="#m" x="594" y="322"/>
<use href="#m" x="594" y="529"/>
<use href="#m" x="452" y="625"/>
<use href="#m" x="577" y="625"/>
<use href="#l" x="382" y="311"/>
<use href="#l" x="716" y="311"/>
<use href="#l" x="417" y="637"/>
<use href="#l" x="611" y="637"/>
<use href="#s" x="320" y="408"/>
<use href="#s" x="320" y="425"/>
<use href="#s" x="320" y="443"/>
<use href="#s" x="320" y="461"/>
<use href="#s" x="320" y="478"/>
<use href="#s" x="320" y="496"/>
<use href="#s" x="320" y="531"/>
<use href="#s" x="320" y="549"/>
<use href="#s" x="320" y="566"/>
<use href="#s" x="320" y="584"/>
<use href="#s" x="320" y="601"/>
<use href="#s" x="320" y="619"/>
<use href="#s" x="338" y="408"/>
<use href="#s" x="338" y="425"/>
<use href="#s" x="338" y="443"/>
<use href="#s" x="338" y="461"/>
<use href="#s" x="338" y="478"/>
<use href="#s" x="338" y="496"/>
<use href="#s" x="338" y="531"/>
<use href="#s" x="338" y="549"/>
<use href="#s" x="338" y="566"/>
<use href="#s" x="338" y="584"/>
<use href="#s" x="338" y="601"/>
<use href="#s" x="338" y="619"/>
<use href="#s" x="382" y="408"/>
<use href="#s" x="382" y="425"/>
<use href="#s" x="382" y="443"/>
<use href="#s" x="382" y="461"/>
<use href="#s" x="382" y="478"/>
<use href="#s" x="382" y="496"/>
<use href="#s" x="382" y="531"/>
<use href="#s" x="382" y="549"/>
<use href="#s" x="382" y="566"/>
<use href="#s" x="382" y="584"/>
<use href="#s" x="382" y="601"/>
<use href="#s" x="382" y="619"/>
<use href="#t" x="452" y="365"/>
<use href="#t" x="487" y="365"/>
<use href="#t" x="611" y="346"/>
<use href="#t" x="646" y="346"/>
<use href="#t" x="585" y="472"/>
<use href="#t" x="585" y="508"/>
<use href="#t" x="461" y="399"/>
<use href="#t" x="479" y="399"/>
<use href="#t" x="496" y="399"/>
<use href="#t" x="514" y="399"/>
<use href="#t" x="531" y="399"/>
<use href="#t" x="549" y="399"/>
<use href="#t" x="567" y="399"/>
<use href="#t" x="584" y="399"/>
<use href="#t" x="461" y="452"/>
<use href="#t" x="479" y="452"/>
<use href="#t" x="496" y="452"/>
<use href="#t" x="514" y="452"/>
<use href="#t" x="531" y="452"/>
<use href="#t" x="549" y="452"/>
<use href="#t" x="567" y="452"/>
<use href="#t" x="584" y="452"/>
<use href="#s" x="514" y="371"/>
<use href="#s" x="532" y="371"/>
<use href="#s" x="514" y="480"/>
<use href="#s" x="532" y="480"/>
<use href="#t" x="620" y="373"/>
<use href="#t" x="620" y="390"/>
<use href="#t" x="620" y="408"/>
<use href="#t" x="620" y="426"/>
<use href="#t" x="620" y="443"/>
<use href="#t" x="620" y="461"/>
<use href="#t" x="620" y="478"/>
<use href="#t" x="673" y="373"/>
<use href="#t" x="673" y="390"/>
<use href="#t" x="673" y="408"/>
<use href="#t" x="673" y="426"/>
<use href="#t" x="673" y="443"/>
<use href="#t" x="673" y="461"/>
<use href="#t" x="673" y="478"/>
<use href="#s" x="668" y="205"/>
<use href="#s" x="668" y="223"/>
<use href="#s" x="668" y="241"/>
<use href="#s" x="686" y="205"/>
<use href="#s" x="686" y="223"/>
<use href="#s" x="686" y="241"/>
<use href="#s" x="703" y="205"/>
<use href="#s" x="703" y="223"/>
<use href="#s" x="703" y="241"/>
<use href="#s" x="721" y="205"/>
<use href="#s" x="721" y="223"/>
<use href="#s" x="721" y="241"/>
<use href="#s" x="739" y="205"/>
<use href="#s" x="739" y="223"/>
<use href="#s" x="739" y="241"/>
<use href="#s" x="756" y="205"/>
<use href="#s" x="756" y="223"/>
<use href="#s" x="756" y="241"/>
<use href="#s" x="716" y="344"/>
<use href="#s" x="716" y="361"/>
<use href="#s" x="716" y="379"/>
<use href="#s" x="716" y="396"/>
<use href="#s" x="716" y="414"/>
<use href="#s" x="716" y="432"/>
<use href="#s" x="716" y="449"/>
<use href="#s" x="716" y="467"/>
<use href="#s" x="716" y="496"/>
<use href="#s" x="716" y="513"/>
<use href="#s" x="716" y="531"/>
<use href="#s" x="716" y="549"/>
<use href="#s" x="716" y="566"/>
<use href="#s" x="716" y="584"/>
<use href="#s" x="716" y="601"/>
<use href="#s" x="716" y="619"/>
<use href="#s" x="760" y="344"/>
<use href="#s" x="760" y="361"/>
<use href="#s" x="760" y="379"/>
<use href="#s" x="760" y="396"/>
<use href="#s" x="760" y="414"/>
<use href="#s" x="760" y="432"/>
<use href="#s" x="760" y="449"/>
<use href="#s" x="760" y="467"/>
<use href="#s" x="760" y="496"/>
<use href="#s" x="760" y="513"/>
<use href="#s" x="760" y="531"/>
<use href="#s" x="760" y="549"/>
<use href="#s" x="760" y="566"/>
<use href="#s" x="760" y="584"/>
<use href="#s" x="760" y="601"/>
<use href="#s" x="760" y="619"/>
<use href="#s" x="778" y="344"/>
<use href="#s" x="778" y="361"/>
<use href="#s" x="778" y="379"/>
<use href="#s" x="778" y="396"/>
<use href="#s" x="778" y="414"/>
<use href="#s" x="778" y="432"/>
<use href="#s" x="778" y="449"/>
<use href="#s" x="778" y="467"/>
<use href="#s" x="778" y="496"/>
<use href="#s" x="778" y="513"/>
<use href="#s" x="778" y="531"/>
<use href="#s" x="778" y="549"/>
<use href="#s" x="778" y="566"/>
<use href="#s" x="778" y="584"/>
<use href="#s" x="778" y="601"/>
<use href="#s" x="778" y="619"/>
<use href="#s" x="813" y="205"/>
<use href="#s" x="831" y="205"/>
<use href="#s" x="848" y="205"/>
<use href="#s" x="866" y="205"/>
<use href="#s" x="884" y="205"/>
<use href="#s" x="901" y="205"/>
<use href="#s" x="919" y="205"/>
<use href="#s" x="936" y="205"/>
<use href="#s" x="954" y="205"/>
<use href="#s" x="972" y="205"/>
<use href="#s" x="989" y="205"/>
<use href="#s" x="1007" y="205"/>
<use href="#s" x="1024" y="205"/>
<use href="#s" x="1042" y="205"/>
<use href="#s" x="1060" y="205"/>
<use href="#s" x="1077" y="205"/>
<use href="#s" x="1095" y="205"/>
<use href="#s" x="1112" y="205"/>
<use href="#s" x="1130" y="205"/>
<use href="#s" x="1148" y="205"/>
<use href="#s" x="1165" y="205"/>
<use href="#s" x="1183" y="205"/>
<use href="#s" x="1200" y="205"/>
<use href="#s" x="813" y="223"/>
<use href="#s" x="831" y="223"/>
<use href="#s" x="848" y="223"/>
<use href="#s" x="866" y="223"/>
<use href="#s" x="884" y="223"/>
<use href="#s" x="901" y="223"/>
<use href="#s" x="919" y="223"/>
<use href="#s" x="936" y="223"/>
<use href="#s" x="954" y="223"/>
<use href="#s" x="972" y="223"/>
<use href="#s" x="989" y="223"/>
<use href="#s" x="1007" y="223"/>
<use href="#s" x="1024" y="223"/>
<use href="#s" x="1042" y="223"/>
<use href="#s" x="1060" y="223"/>
<use href="#s" x="1077" y="223"/>
<use href="#s" x="1095" y="223"/>
<use href="#s" x="1112" y="223"/>
<use href="#s" x="1130" y="223"/>
<use href="#s" x="1148" y="223"/>
<use href="#s" x="1165" y="223"/>
<use href="#s" x="1183" y="223"/>
<use href="#s" x="1200" y="223"/>
<use href="#s" x="813" y="241"/>
<use href="#s" x="831" y="241"/>
<use href="#s" x="848" y="241"/>
<use href="#s" x="866" y="241"/>
<use href="#s" x="884" y="241"/>
<use href="#s" x="901" y="241"/>
<use href="#s" x="919" y="241"/>
<use href="#s" x="936" y="241"/>
<use href="#s" x="954" y="241"/>
<use href="#s" x="972" y="241"/>
<use href="#s" x="989" y="241"/>
<use href="#s" x="1007" y="241"/>
<use href="#s" x="1024" y="241"/>
<use href="#s" x="1042" y="241"/>
<use href="#s" x="1060" y="241"/>
<use href="#s" x="1077" y="241"/>
<use href="#s" x="1095" y="241"/>
<use href="#s" x="1112" y="241"/>
<use href="#s" x="1130" y="241"/>
<use href="#s" x="1148" y="241"/>
<use href="#s" x="1165" y="241"/>
<use href="#s" x="1183" y="241"/>
<use href="#s" x="1200" y="241"/>
<use href="#s" x="813" y="258"/>
<use href="#s" x="831" y="258"/>
<use href="#s" x="848" y="258"/>
<use href="#s" x="866" y="258"/>
<use href="#s" x="884" y="258"/>
<use href="#s" x="901" y="258"/>
<use href="#s" x="919" y="258"/>
<use href="#s" x="936" y="258"/>
<use href="#s" x="954" y="258"/>
<use href="#s" x="972" y="258"/>
<use href="#s" x="989" y="258"/>
<use href="#s" x="1007" y="258"/>
<use href="#s" x="1024" y="258"/>
<use href="#s" x="1042" y="258"/>
<use href="#s" x="1060" y="258"/>
<use href="#s" x="1077" y="258"/>
<use href="#s" x="1095" y="258"/>
<use href="#s" x="1112" y="258"/>
<use href="#s" x="1130" y="258"/>
<use href="#s" x="1148" y="258"/>
<use href="#s" x="1165" y="258"/>
<use href="#s" x="1183" y="258"/>
<use href="#s" x="1200" y="258"/>
<use href="#s" x="813" y="276"/>
<use href="#s" x="831" y="276"/>
<use href="#s" x="848" y="276"/>
<use href="#s" x="866" y="276"/>
<use href="#s" x="884" y="276"/>
<use href="#s" x="901" y="276"/>
<use href="#s" x="919" y="276"/>
<use href="#s" x="936" y="276"/>
<use href="#s" x="954" y="276"/>
<use href="#s" x="972" y="276"/>
<use href="#s" x="989" y="276"/>
<use href="#s" x="1007" y="276"/>
<use href="#s" x="1024" y="276"/>
<use href="#s" x="1042" y="276"/>
<use href="#s" x="1060" y="276"/>
<use href="#s" x="1077" y="276"/>
<use href="#s" x="1095" y="276"/>
<use href="#s" x="1112" y="276"/>
<use href="#s" x="1130" y="276"/>
<use href="#s" x="1148" y="276"/>
<use href="#s" x="1165" y="276"/>
<use href="#s" x="1183" y="276"/>
<use href="#s" x="1200" y="276"/>
<use href="#s" x="813" y="293"/>
<use href="#s" x="831" y="293"/>
<use href="#s" x="848" y="293"/>
<use href="#s" x="866" y="293"/>
<use href="#s" x="884" y="293"/>
<use href="#s" x="901" y="293"/>
<use href="#s" x="919" y="293"/>
<use href="#s" x="936" y="293"/>
<use href="#s" x="954" y="293"/>
<use href="#s" x="972" y="293"/>
<use href="#s" x="989" y="293"/>
<use href="#s" x="1007" y="293"/>
<use href="#s" x="1024" y="293"/>
<use href="#s" x="1042" y="293"/>
<use href="#s" x="1060" y="293"/>
<use href="#s" x="1077" y="293"/>
<use href="#s" x="1095" y="293"/>
<use href="#s" x="1112" y="293"/>
<use href="#s" x="1130" y="293"/>
<use href="#s" x="1200" y="293"/>
<use href="#s" x="813" y="311"/>
<use href="#s" x="831" y="311"/>
<use href="#s" x="848" y="311"/>
<use href="#s" x="866" y="311"/>
<use href="#s" x="884" y="311"/>
<use href="#s" x="901" y="311"/>
<use href="#s" x="919" y="311"/>
<use href="#s" x="936" y="311"/>
<use href="#s" x="954" y="311"/>
<use href="#s" x="972" y="311"/>
<use href="#s" x="989" y="311"/>
<use href="#s" x="1007" y="311"/>
<use href="#s" x="1024" y="311"/>
<use href="#s" x="1042" y="311"/>
<use href="#s" x="1060" y="311"/>
<use href="#s" x="1077" y="311"/>
<use href="#s" x="1095" y="311"/>
<use href="#s" x="1112" y="311"/>
<use href="#s" x="1130" y="311"/>
<use href="#s" x="1200" y="311"/>
<use href="#s" x="813" y="329"/>
<use href="#s" x="831" y="329"/>
<use href="#s" x="848" y="329"/>
<use href="#s" x="866" y="329"/>
<use href="#s" x="884" y="329"/>
<use href="#s" x="901" y="329"/>
<use href="#s" x="919" y="329"/>
<use href="#s" x="936" y="329"/>
<use href="#s" x="954" y="329"/>
<use href="#s" x="972" y="329"/>
<use href="#s" x="989" y="329"/>
<use href="#s" x="1007" y="329"/>
<use href="#s" x="1024" y="329"/>
<use href="#s" x="1042" y="329"/>
<use href="#s" x="1060" y="329"/>
<use href="#s" x="1077" y="329"/>
<use href="#s" x="1095" y="329"/>
<use href="#s" x="1112" y="329"/>
<use href="#s" x="1130" y="329"/>
<use href="#s" x="1200" y="329"/>
<use href="#s" x="813" y="346"/>
<use href="#s" x="831" y="346"/>
<use href="#s" x="848" y="346"/>
<use href="#s" x="866" y="346"/>
<use href="#s" x="884" y="346"/>
<use href="#s" x="901" y="346"/>
<use href="#s" x="919" y="346"/>
<use href="#s" x="936" y="346"/>
<use href="#s" x="954" y="346"/>
<use href="#s" x="972" y="346"/>
<use href="#s" x="989" y="346"/>
<use href="#s" x="1007" y="346"/>
<use href="#s" x="1024" y="346"/>
<use href="#s" x="1042" y="346"/>
<use href="#s" x="1060" y="346"/>
<use href="#s" x="1077" y="346"/>
<use href="#s" x="1095" y="346"/>
<use href="#s" x="1112" y="346"/>
<use href="#s" x="1130" y="346"/>
<use href="#s" x="1148" y="346"/>
<use href="#s" x="1165" y="346"/>
<use href="#s" x="1183" y="346"/>
<use href="#s" x="1200" y="346"/>
<use href="#s" x="813" y="364"/>
<use href="#s" x="831" y="364"/>
<use href="#s" x="848" y="364"/>
<use href="#s" x="866" y="364"/>
<use href="#s" x="884" y="364"/>
<use href="#s" x="901" y="364"/>
<use href="#s" x="919" y="364"/>
<use href="#s" x="936" y="364"/>
<use href="#s" x="954" y="364"/>
<use href="#s" x="972" y="364"/>
<use href="#s" x="989" y="364"/>
<use href="#s" x="1007" y="364"/>
<use href="#s" x="1024" y="364"/>
<use href="#s" x="1042" y="364"/>
<use href="#s" x="1060" y="364"/>
<use href="#s" x="1077" y="364"/>
<use href="#s" x="1095" y="364"/>
<use href="#s" x="1112" y="364"/>
<use href="#s" x="813" y="381"/>
<use href="#s" x="831" y="381"/>
<use href="#s" x="848" y="381"/>
<use href="#s" x="866" y="381"/>
<use href="#s" x="884" y="381"/>
<use href="#s" x="901" y="381"/>
<use href="#s" x="919" y="381"/>
<use href="#s" x="936" y="381"/>
<use href="#s" x="954" y="381"/>
<use href="#s" x="972" y="381"/>
<use href="#s" x="989" y="381"/>
<use href="#s" x="1007" y="381"/>
<use href="#s" x="1024" y="381"/>
<use href="#s" x="1042" y="381"/>
<use href="#s" x="1060" y="381"/>
<use href="#s" x="1077" y="381"/>
<use href="#s" x="1095" y="381"/>
<use href="#s" x="1112" y="381"/>
<use href="#s" x="813" y="399"/>
<use href="#s" x="831" y="399"/>
<use href="#s" x="848" y="399"/>
<use href="#s" x="866" y="399"/>
<use href="#s" x="884" y="399"/>
<use href="#s" x="901" y="399"/>
<use href="#s" x="919" y="399"/>
<use href="#s" x="936" y="399"/>
<use href="#s" x="954" y="399"/>
<use href="#s" x="972" y="399"/>
<use href="#s" x="989" y="399"/>
<use href="#s" x="1007" y="399"/>
<use href="#s" x="1024" y="399"/>
<use href="#s" x="1042" y="399"/>
<use href="#s" x="1060" y="399"/>
<use href="#s" x="1077" y="399"/>
<use href="#s" x="1095" y="399"/>
<use href="#s" x="1112" y="399"/>
<use href="#s" x="813" y="417"/>
<use href="#s" x="831" y="417"/>
<use href="#s" x="848" y="417"/>
<use href="#s" x="866" y="417"/>
<use href="#s" x="884" y="417"/>
<use href="#s" x="901" y="417"/>
<use href="#s" x="919" y="417"/>
<use href="#s" x="936" y="417"/>
<use href="#s" x="954" y="417"/>
<use href="#s" x="972" y="417"/>
<use href="#s" x="989" y="417"/>
<use href="#s" x="1007" y="417"/>
<use href="#s" x="1024" y="417"/>
<use href="#s" x="1042" y="417"/>
<use href="#s" x="1060" y="417"/>
<use href="#s" x="1077" y="417"/>
<use href="#s" x="1095" y="417"/>
<use href="#s" x="1112" y="417"/>
<use href="#s" x="813" y="434"/>
<use href="#s" x="831" y="434"/>
<use href="#s" x="848" y="434"/>
<use href="#s" x="866" y="434"/>
<use href="#s" x="884" y="434"/>
<use href="#s" x="901" y="434"/>
<use href="#s" x="919" y="434"/>
<use href="#s" x="936" y="434"/>
<use href="#s" x="954" y="434"/>
<use href="#s" x="972" y="434"/>
<use href="#s" x="989" y="434"/>
<use href="#s" x="1007" y="434"/>
<use href="#s" x="1024" y="434"/>
<use href="#s" x="1042" y="434"/>
<use href="#s" x="1060" y="434"/>
<use href="#s" x="1077" y="434"/>
<use href="#s" x="1095" y="434"/>
<use href="#s" x="1112" y="434"/>
<use href="#s" x="813" y="452"/>
<use href="#s" x="831" y="452"/>
<use href="#s" x="848" y="452"/>
<use href="#s" x="866" y="452"/>
<use href="#s" x="884" y="452"/>
<use href="#s" x="901" y="452"/>
<use href="#s" x="919" y="452"/>
<use href="#s" x="936" y="452"/>
<use href="#s" x="954" y="452"/>
<use href="#s" x="972" y="452"/>
<use href="#s" x="989" y="452"/>
<use href="#s" x="1007" y="452"/>
<use href="#s" x="1024" y="452"/>
<use href="#s" x="1042" y="452"/>
<use href="#s" x="1060" y="452"/>
<use href="#s" x="1077" y="452"/>
<use href="#s" x="1095" y="452"/>
<use href="#s" x="1112" y="452"/>
<use href="#s" x="813" y="469"/>
<use href="#s" x="831" y="469"/>
<use href="#s" x="848" y="469"/>
<use href="#s" x="866" y="469"/>
<use href="#s" x="884" y="469"/>
<use href="#s" x="901" y="469"/>
<use href="#s" x="919" y="469"/>
<use href="#s" x="936" y="469"/>
<use href="#s" x="954" y="469"/>
<use href="#s" x="972" y="469"/>
<use href="#s" x="989" y="469"/>
<use href="#s" x="1007" y="469"/>
<use href="#s" x="1024" y="469"/>
<use href="#s" x="1042" y="469"/>
<use href="#s" x="1060" y="469"/>
<use href="#s" x="1077" y="469"/>
<use href="#s" x="1095" y="469"/>
<use href="#s" x="1112" y="469"/>
<use href="#s" x="813" y="487"/>
<use href="#s" x="831" y="487"/>
<use href="#s" x="848" y="487"/>
<use href="#s" x="866" y="487"/>
<use href="#s" x="884" y="487"/>
<use href="#s" x="901" y="487"/>
<use href="#s" x="919" y="487"/>
<use href="#s" x="936" y="487"/>
<use href="#s" x="954" y="487"/>
<use href="#s" x="972" y="487"/>
<use href="#s" x="989" y="487"/>
<use href="#s" x="1007" y="487"/>
<use href="#s" x="1024" y="487"/>
<use href="#s" x="1042" y="487"/>
<use href="#s" x="1060" y="487"/>
<use href="#s" x="1077" y="487"/>
<use href="#s" x="1095" y="487"/>
<use href="#s" x="1112" y="487"/>
<use href="#s" x="813" y="505"/>
<use href="#s" x="831" y="505"/>
<use href="#s" x="848" y="505"/>
<use href="#s" x="866" y="505"/>
<use href="#s" x="884" y="505"/>
<use href="#s" x="901" y="505"/>
<use href="#s" x="919" y="505"/>
<use href="#s" x="936" y="505"/>
<use href="#s" x="954" y="505"/>
<use href="#s" x="972" y="505"/>
<use href="#s" x="989" y="505"/>
<use href="#s" x="1007" y="505"/>
<use href="#s" x="1024" y="505"/>
<use href="#s" x="1042" y="505"/>
<use href="#s" x="1060" y="505"/>
<use href="#s" x="1077" y="505"/>
<use href="#s" x="1095" y="505"/>
<use href="#s" x="1112" y="505"/>
<use href="#s" x="1130" y="505"/>
<use href="#s" x="1148" y="505"/>
<use href="#s" x="1165" y="505"/>
<use href="#s" x="1183" y="505"/>
<use href="#s" x="1200" y="505"/>
<use href="#s" x="813" y="522"/>
<use href="#s" x="831" y="522"/>
<use href="#s" x="848" y="522"/>
<use href="#s" x="866" y="522"/>
<use href="#s" x="884" y="522"/>
<use href="#s" x="901" y="522"/>
<use href="#s" x="919" y="522"/>
<use href="#s" x="936" y="522"/>
<use href="#s" x="954" y="522"/>
<use href="#s" x="972" y="522"/>
<use href="#s" x="989" y="522"/>
<use href="#s" x="1007" y="522"/>
<use href="#s" x="1024" y="522"/>
<use href="#s" x="1042" y="522"/>
<use href="#s" x="1060" y="522"/>
<use href="#s" x="1077" y="522"/>
<use href="#s" x="1095" y="522"/>
<use href="#s" x="1112" y="522"/>
<use href="#s" x="1130" y="522"/>
<use href="#s" x="1200" y="522"/>
<use href="#s" x="813" y="540"/>
<use href="#s" x="831" y="540"/>
<use href="#s" x="848" y="540"/>
<use href="#s" x="866" y="540"/>
<use href="#s" x="884" y="540"/>
<use href="#s" x="901" y="540"/>
<use href="#s" x="919" y="540"/>
<use href="#s" x="936" y="540"/>
<use href="#s" x="954" y="540"/>
<use href="#s" x="972" y="540"/>
<use href="#s" x="989" y="540"/>
<use href="#s" x="1007" y="540"/>
<use href="#s" x="1024" y="540"/>
<use href="#s" x="1042" y="540"/>
<use href="#s" x="1060" y="540"/>
<use href="#s" x="1077" y="540"/>
<use href="#s" x="1095" y="540"/>
<use href="#s" x="1112" y="540"/>
<use href="#s" x="1130" y="540"/>
<use href="#s" x="1200" y="540"/>
<use href="#s" x="813" y="557"/>
<use href="#s" x="831" y="557"/>
<use href="#s" x="848" y="557"/>
<use href="#s" x="866" y="557"/>
<use href="#s" x="884" y="557"/>
<use href="#s" x="901" y="557"/>
<use href="#s" x="919" y="557"/>
<use href="#s" x="936" y="557"/>
<use href="#s" x="954" y="557"/>
<use href="#s" x="972" y="557"/>
<use href="#s" x="989" y="557"/>
<use href="#s" x="1007" y="557"/>
<use href="#s" x="1024" y="557"/>
<use href="#s" x="1042" y="557"/>
<use href="#s" x="1060" y="557"/>
<use href="#s" x="1077" y="557"/>
<use href="#s" x="1095" y="557"/>
<use href="#s" x="1112" y="557"/>
<use href="#s" x="1130" y="557"/>
<use href="#s" x="1200" y="557"/>
<use href="#s" x="813" y="575"/>
<use href="#s" x="831" y="575"/>
<use href="#s" x="848" y="575"/>
<use href="#s" x="866" y="575"/>
<use href="#s" x="884" y="575"/>
<use href="#s" x="901" y="575"/>
<use href="#s" x="919" y="575"/>
<use href="#s" x="936" y="575"/>
<use href="#s" x="954" y="575"/>
<use href="#s" x="972" y="575"/>
<use href="#s" x="989" y="575"/>
<use href="#s" x="1007" y="575"/>
<use href="#s" x="1024" y="575"/>
<use href="#s" x="1042" y="575"/>
<use href="#s" x="1060" y="575"/>
<use href="#s" x="1077" y="575"/>
<use href="#s" x="1095" y="575"/>
<use href="#s" x="1112" y="575"/>
<use href="#s" x="1130" y="575"/>
<use href="#s" x="1148" y="575"/>
<use href="#s" x="1165" y="575"/>
<use href="#s" x="1183" y="575"/>
<use href="#s" x="1200" y="575"/>
<use href="#s" x="813" y="593"/>
<use href="#s" x="831" y="593"/>
<use href="#s" x="848" y="593"/>
<use href="#s" x="866" y="593"/>
<use href="#s" x="884" y="593"/>
<use href="#s" x="901" y="593"/>
<use href="#s" x="919" y="593"/>
<use href="#s" x="936" y="593"/>
<use href="#s" x="954" y="593"/>
<use href="#s" x="972" y="593"/>
<use href="#s" x="989" y="593"/>
<use href="#s" x="1007" y="593"/>
<use href="#s" x="1024" y="593"/>
<use href="#s" x="1042" y="593"/>
<use href="#s" x="1060" y="593"/>
<use href="#s" x="1077" y="593"/>
<use href="#s" x="1095" y="593"/>
<use href="#s" x="1112" y="593"/>
<use href="#s" x="1130" y="593"/>
<use href="#s" x="1148" y="593"/>
<use href="#s" x="1165" y="593"/>
<use href="#s" x="1183" y="593"/>
<use href="#s" x="1200" y="593"/>
<use href="#s" x="813" y="610"/>
<use href="#s" x="831" y="610"/>
<use href="#s" x="848" y="610"/>
<use href="#s" x="866" y="610"/>
<use href="#s" x="884" y="610"/>
<use href="#s" x="901" y="610"/>
<use href="#s" x="919" y="610"/>
<use href="#s" x="936" y="610"/>
<use href="#s" x="954" y="610"/>
<use href="#s" x="972" y="610"/>
<use href="#s" x="989" y="610"/>
<use href="#s" x="1007" y="610"/>
<use href="#s" x="1024" y="610"/>
<use href="#s" x="1042" y="610"/>
<use href="#s" x="1060" y="610"/>
<use href="#s" x="1077" y="610"/>
<use href="#s" x="1095" y="610"/>
<use href="#s" x="1112" y="610"/>
<use href="#s" x="1130" y="610"/>
<use href="#s" x="1148" y="610"/>
<use href="#s" x="1165" y="610"/>
<use href="#s" x="1183" y="610"/>
<use href="#s" x="1200" y="610"/>
<use href="#s" x="813" y="628"/>
<use href="#s" x="831" y="628"/>
<use href="#s" x="848" y="628"/>
<use href="#s" x="866" y="628"/>
<use href="#s" x="884" y="628"/>
<use href="#s" x="901" y="628"/>
<use href="#s" x="919" y="628"/>
<use href="#s" x="936" y="628"/>
<use href="#s" x="954" y="628"/>
<use href="#s" x="972" y="628"/>
<use href="#s" x="989" y="628"/>
<use href="#s" x="1007" y="628"/>
<use href="#s" x="1024" y="628"/>
<use href="#s" x="1042" y="628"/>
<use href="#s" x="1060" y="628"/>
<use href="#s" x="1077" y="628"/>
<use href="#s" x="1095" y="628"/>
<use href="#s" x="1112" y="628"/>
<use href="#s" x="1130" y="628"/>
<use href="#s" x="1148" y="628"/>
<use href="#s" x="1165" y="628"/>
<use href="#s" x="1183" y="628"/>
<use href="#s" x="1200" y="628"/>
<use href="#s" x="813" y="645"/>
<use href="#s" x="831" y="645"/>
<use href="#s" x="848" y="645"/>
<use href="#s" x="866" y="645"/>
<use href="#s" x="884" y="645"/>
<use href="#s" x="901" y="645"/>
<use href="#s" x="919" y="645"/>
<use href="#s" x="936" y="645"/>
<use href="#s" x="954" y="645"/>
<use href="#s" x="972" y="645"/>
<use href="#s" x="989" y="645"/>
<use href="#s" x="1007" y="645"/>
<use href="#s" x="1024" y="645"/>
<use href="#s" x="1042" y="645"/>
<use href="#s" x="1060" y="645"/>
<use href="#s" x="1077" y="645"/>
<use href="#s" x="1095" y="645"/>
<use href="#s" x="1112" y="645"/>
<use href="#s" x="1130" y="645"/>
<use href="#s" x="1148" y="645"/>
<use href="#s" x="1165" y="645"/>
<use href="#s" x="1183" y="645"/>
<use href="#s" x="1200" y="645"/>
<use href="#m" x="1165" y="309"/>
<use href="#m" x="1165" y="379"/>
<use href="#m" x="1165" y="472"/>
<use href="#m" x="1165" y="541"/>
<rect x="167" y="117" width="1111" height="635" fill="url(#grid)"/>
</svg>
<div class="a" style="left:2px;top:753px;width:1278px;height:1px;background:#fff"></div><div class="a" style="left:2px;top:773px;width:1278px;height:1px;background:#ecebe7"></div><div class="a" style="left:1px;top:756px;width:104px;height:16px;border:1px solid;border-color:#808080 #fff #fff #808080;background:#fff"></div><div class="a" style="left:2px;top:757px;width:102px;height:1px;background:#404040"></div><span class="txt" style="left:6px;top:759px">1.8945:1.8066</span><div class="a" style="left:2px;top:772px;width:103px;height:1px;background:#ecebe7"></div><div class="a" style="left:108px;top:756px;width:978px;height:16px;border:1px solid;border-color:#808080 #fff #fff #808080;background:transparent"></div><div class="a" style="left:1088px;top:756px;width:71px;height:16px;border:1px solid;border-color:#808080 #fff #fff #808080;background:transparent"><span class="txt" style="left:1.5px;top:0px">X=5.475</span></div><div class="a" style="left:1161px;top:756px;width:71px;height:16px;border:1px solid;border-color:#808080 #fff #fff #808080;background:transparent"><span class="txt" style="left:1.5px;top:0px">Y=2.539</span></div><div class="a" style="left:1234px;top:756px;width:45px;height:16px;border:1px solid;border-color:#808080 #fff #fff #808080;background:transparent"></div>
</div>
</body></html>
